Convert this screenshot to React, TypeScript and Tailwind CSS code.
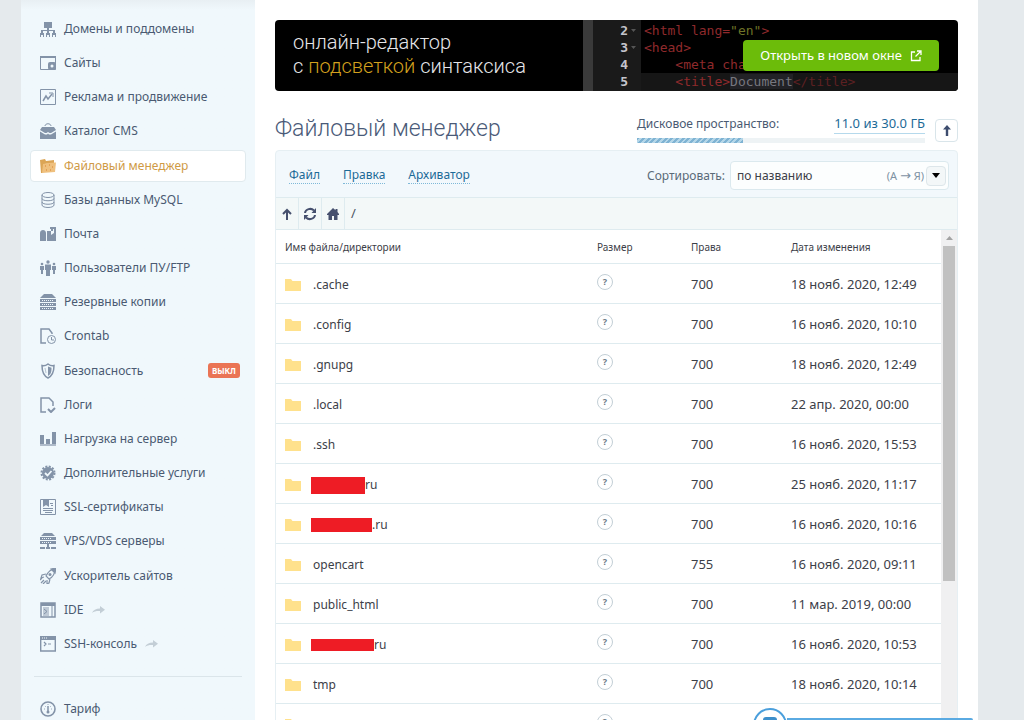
import type { ReactNode } from 'react';

type NavItem = { label: string; icon: ReactNode; active?: boolean; badge?: string; external?: boolean };

const navItems: NavItem[] = [
  {
    label: 'Домены и поддомены',
    icon: (
      <>
        <path d="M4 1h8v6H4zM7 7h2v3H7zM0 12h4v4H3v-2H1v2H0zM6 12h4v4H9v-2H7v2H6zM12 12h4v4h-1v-2h-2v2h-1z" />
        <path d="M1 9h14v3h-2v-2H9v2H7v-2H3v2H1z" />
      </>
    ),
  },
  {
    label: 'Сайты',
    icon: (
      <>
        <path d="M.5 1.5h15v13H.5z" fill="none" stroke="currentColor" />
        <path d="M0 1h16v2H0z" />
        <rect x="8" y="7" width="8" height="8" rx="2" />
        <circle cx="12" cy="11" r="1.5" fill="#f0f8fc" />
      </>
    ),
  },
  {
    label: 'Реклама и продвижение',
    icon: (
      <g fill="none" stroke="currentColor">
        <path d="M.5.5h15v15H.5z" />
        <path d="M3 12l3-5 2 3 4-5" strokeWidth="1.5" />
        <path d="M9 4h4v4" />
      </g>
    ),
  },
  {
    label: 'Каталог CMS',
    icon: (
      <>
        <path d="M5 3c0-3 6-3 6 0" fill="none" stroke="currentColor" />
        <path d="M2 4h12l2 3-5 3H9.500L8 9l-1.500 1H5L0 7zM0 8.500L5 11.500h2l1-1 1 1h2l5-3V16H0z" />
      </>
    ),
  },
  {
    label: 'Файловый менеджер',
    active: true,
    icon: (
      <>
        <path d="M0 2l5-1 1 2 8-1v3l-9 1-2 9H1z" fill="#dba556" />
        <path d="M3 6l5-1 8-.5L15 14 2 15z" fill="#efc07e" />
        <path d="M5 8h1M9 7h1M12 9h1M6 12h1M10 12h1" stroke="#d9822f" />
      </>
    ),
  },
  {
    label: 'Базы данных MySQL',
    icon: (
      <g fill="none" stroke="currentColor">
        <ellipse cx="8" cy="3" rx="6" ry="2.5" />
        <path d="M2 3v10c0 3.300 12 3.300 12 0V3M2 6.500c0 3 12 3 12 0M2 10c0 3 12 3 12 0" />
      </g>
    ),
  },
  {
    label: 'Почта',
    icon: <path d="M0 15V7c0-4 6-4 6 0v8zM7 15V5h4v4l3-2V3h-4V1h6v14zM11 3h2v2h-2z" />,
  },
  {
    label: 'Пользователи ПУ/FTP',
    icon: (
      <>
        <circle cx="8" cy="2" r="1.700" />
        <circle cx="2" cy="4" r="1.300" />
        <circle cx="14" cy="4" r="1.300" />
        <path d="M5 4.500h6V10h-1v6H6v-6H5zM0 6h4v4H3v4H1v-4H0zM12 6h4v4h-1v4h-2v-4h-1z" />
      </>
    ),
  },
  {
    label: 'Резервные копии',
    icon: (
      <>
        <path d="M4 0h8l4 4H0zM0 5h16v3H0zM0 9h16v3H0zM0 13h16v3H0z" />
        <path d="M2 6.500h12M2 10.500h12M2 14.500h12" stroke="#f0f8fc" strokeDasharray="1 1" />
      </>
    ),
  },
  {
    label: 'Crontab',
    icon: (
      <g fill="none" stroke="currentColor">
        <path d="M6 15H1V1h8l3 4v1" strokeWidth="1.500" />
        <circle cx="11.500" cy="11.500" r="4" />
        <path d="M11.500 9v3H14" />
      </g>
    ),
  },
  {
    label: 'Безопасность',
    badge: 'выкл',
    icon: (
      <>
        <path d="M2 2.500c2 .5 4 0 6-1.500 2 1.500 4 2 6 1.500 0 6-1 10-6 12.500C3 12.500 2 8.500 2 2.500z" fill="none" stroke="currentColor" strokeWidth="1.500" />
        <path d="M8 3.500l3.500 1.200C11.500 9 11 11 8 13z" />
        <path d="M5 5l1 5" stroke="currentColor" opacity=".5" />
      </>
    ),
  },
  {
    label: 'Логи',
    icon: (
      <g fill="none" stroke="currentColor" strokeWidth="1.500">
        <path d="M6 15H1V1h8l4 4v4" />
        <path d="M8 12l3 3 4-4" strokeWidth="2" />
      </g>
    ),
  },
  {
    label: 'Нагрузка на сервер',
    icon: (
      <>
        <path d="M0 4h4v9H0zM6 8h4v5H6zM12 1h4v12h-4z" />
        <path d="M0 13h16v2H0z" opacity=".6" />
      </>
    ),
  },
  {
    label: 'Дополнительные услуги',
    icon: (
      <>
        <circle cx="8" cy="8" r="6" />
        <circle cx="8" cy="8" r="6.500" fill="none" stroke="currentColor" strokeWidth="2" strokeDasharray="2 1.400" />
        <path d="M5 8l2.500 2.500L11.500 6" fill="none" stroke="#f0f8fc" strokeWidth="1.800" />
      </>
    ),
  },
  {
    label: 'SSL-сертификаты',
    icon: (
      <>
        <path d="M.5.5h15v15H.5z" fill="none" stroke="currentColor" />
        <path d="M3 0h6v8L6 6 3 8zM10 4h3v1h-3zM11 6h2v1h-2zM3 9h10v1H3zM3 11h10v1H3zM5 13h7v1H5z" />
      </>
    ),
  },
  {
    label: 'VPS/VDS серверы',
    icon: (
      <>
        <path d="M4 0h8l3 3H1zM0 4h16v3H0zM0 8h16v3H0zM7 11h2v3H7zM0 14h5v2H0zM6 14h4v2H6zM11 14h5v2h-5z" />
        <path d="M2 5.500h9M2 9.500h9" stroke="#f0f8fc" strokeDasharray="1 1" />
      </>
    ),
  },
  {
    label: 'Ускоритель сайтов',
    icon: (
      <>
        <path d="M15 1c-4 0-7 3-9 7l3 3c4-2 6-6 6-10zM6 6L2 7l-1 3 3-1M10 11l-1 4-2 1v-4" fill="none" stroke="currentColor" strokeWidth="1.200" />
        <path d="M11 1l5-1-1 5zM1 15l3-3M3 16l3-3M0 12l2-2" stroke="currentColor" strokeWidth="1.200" />
        <circle cx="10" cy="6.500" r="1.500" />
      </>
    ),
  },
  {
    label: 'IDE',
    external: true,
    icon: (
      <>
        <path d="M1 1h14v14H1z" fill="none" stroke="currentColor" strokeWidth="1.500" />
        <path d="M1 1h14v3H1z" />
        <path d="M3 5h6v9H3z" opacity=".45" />
        <path d="M12 4v11M4 7l3 2.500L4 12" fill="none" stroke="currentColor" />
      </>
    ),
  },
  {
    label: 'SSH-консоль',
    external: true,
    icon: (
      <>
        <path d="M.7 1h14.600v14H.7z" fill="none" stroke="currentColor" strokeWidth="1.400" />
        <path d="M0 0h16v4H0z" />
        <path d="M2 2h6" stroke="#f0f8fc" strokeDasharray="1 1" />
        <path d="M4 6l2 2-2 2M8 8h3" fill="none" stroke="currentColor" strokeWidth="1.200" />
      </>
    ),
  },
];

const tariffItem: NavItem = {
  label: 'Тариф',
  icon: (
    <>
      <circle cx="8" cy="8" r="7" fill="none" stroke="currentColor" strokeWidth="1.600" />
      <path d="M8 5v5" stroke="currentColor" strokeWidth="1.500" />
      <circle cx="8" cy="11" r="1.500" />
      <path d="M4 8h1M5 5l.7.700M8 3v1M11 5l-.7.700M11 8h1" stroke="currentColor" strokeWidth=".8" />
    </>
  ),
};

type FileRow = { name: string; mode: string; date: string; mask?: string };

const files: FileRow[] = [
  { name: '.cache', mode: '700', date: '18 нояб. 2020, 12:49' },
  { name: '.config', mode: '700', date: '16 нояб. 2020, 10:10' },
  { name: '.gnupg', mode: '700', date: '18 нояб. 2020, 12:49' },
  { name: '.local', mode: '700', date: '22 апр. 2020, 00:00' },
  { name: '.ssh', mode: '700', date: '16 нояб. 2020, 15:53' },
  { name: 'ru', mode: '700', date: '25 нояб. 2020, 11:17', mask: 'w-[54px] h-[17px]' },
  { name: '.ru', mode: '700', date: '16 нояб. 2020, 10:16', mask: 'w-[61px] h-[14px]' },
  { name: 'opencart', mode: '755', date: '16 нояб. 2020, 09:11' },
  { name: 'public_html', mode: '700', date: '11 мар. 2019, 00:00' },
  { name: 'ru', mode: '700', date: '16 нояб. 2020, 10:53', mask: 'w-[63px] h-[12px]' },
  { name: 'tmp', mode: '700', date: '18 нояб. 2020, 10:14' },
  { name: '', mode: '', date: '' },
];

function NavLink({ item }: { item: NavItem }) {
  return (
    <a
      href="#"
      className={
        item.active
          ? 'flex h-8 items-center rounded border border-[#e0eaee] bg-white px-[9px] text-[#cf9a45]'
          : 'flex h-8 items-center border border-transparent px-[9px] text-[#4a5a72]'
      }
    >
      <svg viewBox="0 0 16 16" className="mr-2 size-4 shrink-0 text-[#8393a8]" fill="currentColor">
        {item.icon}
      </svg>
      <span>{item.label}</span>
      {item.external && (
        <svg viewBox="0 0 13 8" className="ml-2 h-2 w-[13px]" fill="#c3ced6">
          <path d="M0 7c1-3 4-4.500 8-4.500V0l5 3.800L8 7.500V5C5 4.800 2 5.200 0 7z" />
        </svg>
      )}
      {item.badge && (
        <span className="-mr-1 ml-auto rounded-[3px] bg-[#ea7455] px-1 text-[8px] leading-[15px] font-bold text-white uppercase">
          {item.badge}
        </span>
      )}
    </a>
  );
}

function Banner() {
  return (
    <div className="relative flex h-[71px] overflow-hidden rounded bg-black">
      <p className="flex-1 pt-[10px] pl-[18px] font-[Roboto,sans-serif] text-[20px] leading-6 font-light text-[#e6e6ea]">
        онлайн-редактор
        <br />с <span className="text-[#d3a01e]">подсветкой</span> синтаксиса
      </p>
      <div className="w-[10px] bg-[#3a3a3a]"></div>
      <div className="w-12 bg-[#1a1a1a] pt-[2px] pr-[13px] text-right font-['DejaVu_Sans_Mono',monospace] text-[13px] leading-[17px] font-bold text-[#c4c4cc]">
        <div>2</div>
        <div>3</div>
        <div>4</div>
        <div>5</div>
      </div>
      <pre className="w-[317px] pt-[2px] font-['DejaVu_Sans_Mono',monospace] text-[13px] leading-[17px] text-[#8f2a2c]">
        <div className="pl-[3px]">
          {'<html lang='}
          <span className="text-[#6f7327]">"en"</span>
          {'>'}
        </div>
        <div className="pl-[3px]">{'<head>'}</div>
        <div className="pl-[3px]">{'    <meta cha'}</div>
        <div className="bg-[#161616] pb-px pl-[3px]">
          {'    <title>'}
          <span className="bg-[#222226] text-[#77777f]">Document</span>
          <span className="text-[#5c2022]">{'</title>'}</span>
        </div>
      </pre>
      <svg viewBox="0 0 5 22" className="absolute top-2 right-[322px] h-[22px] w-[5px]" fill="#555">
        <path d="M0 1h5L2.500 4zM0 18h5L2.500 21z" />
      </svg>
      <button className="absolute top-5 right-[19px] flex h-[31px] items-center gap-2 rounded bg-[#6cbc0a] px-[17px] text-[13px] text-white">
        Открыть в новом окне
        <svg viewBox="0 0 12 12" className="size-3" fill="none" stroke="currentColor" strokeWidth="1.300">
          <path d="M5 2H1.500v8.500H10V7M7 1h4v4M11 1L5.500 6.500" />
        </svg>
      </button>
    </div>
  );
}

function Heading() {
  return (
    <div className="flex h-[59px] items-start pt-[23px]">
      <h1 className="flex-1 font-[Roboto,sans-serif] text-[23px] leading-[30px] font-light text-[#4a5a78]">Файловый менеджер</h1>
      <div className="w-72 leading-5 text-[#4a5a72]">
        <div className="flex justify-between">
          <span id="disk">Дисковое пространство:</span>
          <a href="#" className="border-b border-[#b5d9ec] text-[13px] leading-[18px] text-[#1d6a97]">
            11.0 из 30.0 ГБ
          </a>
        </div>
        <div role="progressbar" aria-labelledby="disk" aria-valuenow={37} className="mt-1 h-[5px] bg-[#eef3f5]">
          <div
            className="h-full bg-[repeating-linear-gradient(135deg,#7fb3d3_0px,#7fb3d3_2px,#b4d6e8_2px,#b4d6e8_4px)]"
            style={{ width: `${(11 / 30) * 100}%` }}
          ></div>
        </div>
      </div>
      <button aria-label="Наверх" className="mt-[5px] ml-[10px] flex size-[23px] items-center justify-center rounded border border-[#d9e5ea] bg-white">
        <svg viewBox="0 0 8 11" className="h-[11px] w-2" fill="#3d4d6e">
          <path d="M4 0l4 4.500H5.200V11H2.800V4.500H0z" />
        </svg>
      </button>
    </div>
  );
}

function Toolbar() {
  return (
    <div className="flex h-[47px] items-center border-b border-[#deebef] pt-[3px] pr-2 pl-[13px]">
      <div className="flex flex-1 gap-[23px]">
        {['Файл', 'Правка', 'Архиватор'].map((label) => (
          <button key={label} className="border-b border-dotted border-[#7fb9d8] leading-4 text-[#1d6a97]">
            {label}
          </button>
        ))}
      </div>
      <label htmlFor="sort" className="mr-[5px] text-[#5a6a78]">
        Сортировать:
      </label>
      <div className="relative w-[219px]">
        <select
          id="sort"
          className="block h-[29px] w-full appearance-none rounded border border-[#dbe9ee] bg-[#fcfefe] px-[6px] text-[#3c4048]"
        >
          <option>по названию</option>
        </select>
        <span className="pointer-events-none absolute inset-y-0 right-[3px] flex items-center gap-[2px] text-[11px] text-[#7e92a3]">
          <span>
            (А <span className="font-['DejaVu_Sans',sans-serif] text-[13px]">→</span> Я)
          </span>
          <span className="flex size-5 items-center justify-center rounded border border-[#dde6ea] bg-[#f3f7f8]">
            <svg viewBox="0 0 8 5" className="h-[5px] w-2" fill="#000">
              <path d="M0 0h8L4 5z" />
            </svg>
          </span>
        </span>
      </div>
    </div>
  );
}

function PathBar() {
  const button = 'flex w-[23px] items-center justify-center border-r border-[#deebef]';
  return (
    <div className="flex h-8 border-b border-[#deebef] bg-[#f3f8f8]">
      <button aria-label="Вверх" className={button}>
        <svg viewBox="0 0 10 12" className="h-3 w-[10px]" fill="none" stroke="#46506e" strokeWidth="2">
          <path d="M5 12V2M1 6l4-4 4 4" />
        </svg>
      </button>
      <button aria-label="Обновить" className={button}>
        <svg viewBox="0 0 14 14" className="size-[14px]" fill="#46506e">
          <path d="M2 6c.5-4 6-5.500 9-2.500M12 8c-.5 4-6 5.500-9 2.500" fill="none" stroke="#46506e" strokeWidth="2" />
          <path d="M13 1v5H8.500zM1 13V8h4.500z" />
        </svg>
      </button>
      <button aria-label="Домой" className={button}>
        <svg viewBox="0 0 12 12" className="size-3" fill="#46506e">
          <path d="M6 0l2.500 2.300V1h2v3L12 6v1h-1.500v5H7V8H5v4H1.500V7H0V6z" />
        </svg>
      </button>
      <span className="pl-[6px] text-[13px] leading-[31px] text-[#4b5563]">/</span>
    </div>
  );
}

function FileTable() {
  return (
    <table className="w-full flex-1 table-fixed border-collapse bg-white text-left text-[#3c4048]">
      <thead>
        <tr className="h-[33px] border-b border-[#deebef] text-[10px]">
          <th className="pt-[2px] pl-[9px] font-normal">Имя файла/директории</th>
          <th className="w-[94px] pt-[2px] font-normal">Размер</th>
          <th className="w-[100px] pt-[2px] font-normal">Права</th>
          <th className="w-[150px] pt-[2px] font-normal">Дата изменения</th>
        </tr>
      </thead>
      <tbody>
        {files.map((file, index) => (
          <tr key={index} className="h-10 border-b border-[#deebef]">
            <td className="pt-1 pl-[9px]">
              <div className="flex items-center">
                <svg viewBox="0 0 16 12" className="mr-3 h-3 w-4" fill="#ffe18c">
                  <path d="M0 0h6l1.500 2H16v10H0z" />
                </svg>
                {file.mask && <span className={`-ml-[2px] bg-[#ee1c25] ${file.mask}`}></span>}
                <span>{file.name}</span>
              </div>
            </td>
            <td className="pb-[2px]">
              <button className="block size-4 rounded-full border border-[#c3cfd6] text-[9px] leading-[14px] font-bold text-[#6b7a86]">
                ?
              </button>
            </td>
            <td className="pt-1 text-[13px]">{file.mode}</td>
            <td className="pt-1 text-[13px]">{file.date}</td>
          </tr>
        ))}
      </tbody>
    </table>
  );
}

export default function App() {
  return (
    <div className="relative flex h-screen overflow-hidden bg-[#e5eaed] pr-[46px] pl-[21px] font-['Noto_Sans',sans-serif] text-[12px]">
      <aside className="w-[234px] shrink-0 bg-[#f0f8fc] bg-linear-to-b from-[#e8eff3] to-[#f0f8fc] to-[10px] px-[9px] pt-[13px]">
        <nav>
          <div className="flex h-[647px] flex-col justify-between">
            {navItems.map((item) => (
              <NavLink key={item.label} item={item} />
            ))}
          </div>
          <hr className="mx-1 my-4 border-[#dbe5ea]" />
          <NavLink item={tariffItem} />
        </nav>
      </aside>

      <main className="min-w-0 flex-1 bg-white px-5 pt-5">
        <Banner />
        <Heading />
        <section className="rounded-t border border-[#e6eff3] bg-[#f2f8fc]">
          <Toolbar />
          <PathBar />
          <div className="flex">
            <FileTable />
            <div className="w-4 shrink-0 bg-[#f0f0f1] px-[2px]">
              <svg viewBox="0 0 12 16" className="h-4 w-3" fill="#a3a3a3">
                <path d="M3 10h7L6.500 6z" />
              </svg>
              <div className="h-[335px] bg-[#c1c1c1]"></div>
            </div>
          </div>
        </section>
      </main>

      <div className="absolute right-[51px] bottom-0 flex items-end">
        <div className="h-3 w-[34px] overflow-visible">
          <div className="flex size-[34px] justify-center rounded-full border-2 border-[#4a9fdc] bg-white pt-[7px]">
            <div className="h-4 w-[14px] rounded-[3px] bg-[#3d8fcb]"></div>
          </div>
        </div>
        <div className="h-[2px] w-[186px] rounded-tr bg-[#5aaae2]"></div>
      </div>
    </div>
  );
}
